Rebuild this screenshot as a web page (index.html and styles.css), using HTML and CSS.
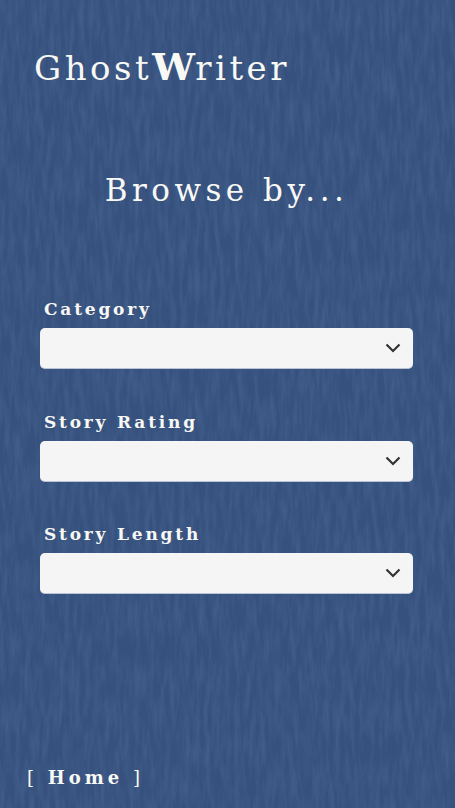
FILE: index.html
```html
<!DOCTYPE html>
<html lang="en">
<head>
<meta charset="utf-8">
<title>GhostWriter</title>
<link rel="stylesheet" href="styles.css">
</head>
<body>
<svg class="texture" aria-hidden="true" width="455" height="808">
  <filter id="paper" x="0" y="0" width="100%" height="100%">
    <feTurbulence type="fractalNoise" baseFrequency="0.2 0.03" numOctaves="4" seed="7"/>
    <feColorMatrix type="matrix" values="0 0 0 0 0.14  0 0 0 0 0.24  0 0 0 0 0.42  0.9 0 0 0 -0.3"/>
  </filter>
  <rect width="455" height="808" filter="url(#paper)" opacity="0.5"/>
</svg>
<main class="page">
  <header class="brand">Ghost<b class="brand-w">W</b>riter</header>
  <h1 class="heading">Browse by...</h1>
  <form class="filters">
    <div class="field">
      <label class="field-label">Category</label>
      <div class="select">
        <svg class="chevron" viewBox="0 0 16 10" width="16" height="10"><path d="M1.500 1.500 8 8l6.500-6.500" fill="none" stroke="#333" stroke-width="2.200"/></svg>
      </div>
    </div>
    <div class="field">
      <label class="field-label">Story Rating</label>
      <div class="select">
        <svg class="chevron" viewBox="0 0 16 10" width="16" height="10"><path d="M1.500 1.500 8 8l6.500-6.500" fill="none" stroke="#333" stroke-width="2.200"/></svg>
      </div>
    </div>
    <div class="field">
      <label class="field-label">Story Length</label>
      <div class="select">
        <svg class="chevron" viewBox="0 0 16 10" width="16" height="10"><path d="M1.500 1.500 8 8l6.500-6.500" fill="none" stroke="#333" stroke-width="2.200"/></svg>
      </div>
    </div>
  </form>
  <a class="home">[ <b class="home-word">Home</b> ]</a>
</main>
</body>
</html>
```
FILE: styles.css
```css
* { box-sizing: border-box; }
html, body { margin: 0; height: 808px; overflow: hidden; }
body {
  background: #36517e;
  color: #f8f8f4;
  font-family: "DejaVu Serif", "Liberation Serif", serif;
  position: relative;
}
.texture { position: absolute; inset: 0; display: block; }
.page {
  position: relative;
  height: 808px;
  display: flex;
  flex-direction: column;
  padding: 44px 42px 0 40px;
}
.brand {
  margin-left: -6px;
  font-size: 34px;
  line-height: 48px;
  letter-spacing: 3.500px;
  white-space: nowrap;
}
.brand-w { font-weight: 700; font-size: 38px; line-height: 40px; letter-spacing: 0.500px; }
.heading {
  margin: 76px 0 0;
  font-weight: 400;
  font-size: 31px;
  line-height: 44px;
  letter-spacing: 4.500px;
  text-align: center;
}
.filters {
  margin-top: 84px;
  display: flex;
  flex-direction: column;
  gap: 39.500px;
}
.field { display: flex; flex-direction: column; gap: 7px; }
.field-label {
  margin-left: 4px;
  padding-top: 1px;
  font-size: 17px;
  line-height: 24px;
  font-weight: 700;
  letter-spacing: 2.800px;
}
.select {
  height: 41px;
  background: #f5f5f5;
  border-radius: 5px;
  border-bottom: 1px solid #b9c3d6;
  display: flex;
  align-items: center;
  justify-content: flex-end;
  padding-right: 12px;
}
.chevron { display: block; }
.home {
  margin-top: auto;
  margin-left: -13px;
  margin-bottom: 16px;
  font-size: 18px;
  line-height: 28px;
  letter-spacing: 4px;
  white-space: pre;
}
.home-word { font-weight: 700; }
```
